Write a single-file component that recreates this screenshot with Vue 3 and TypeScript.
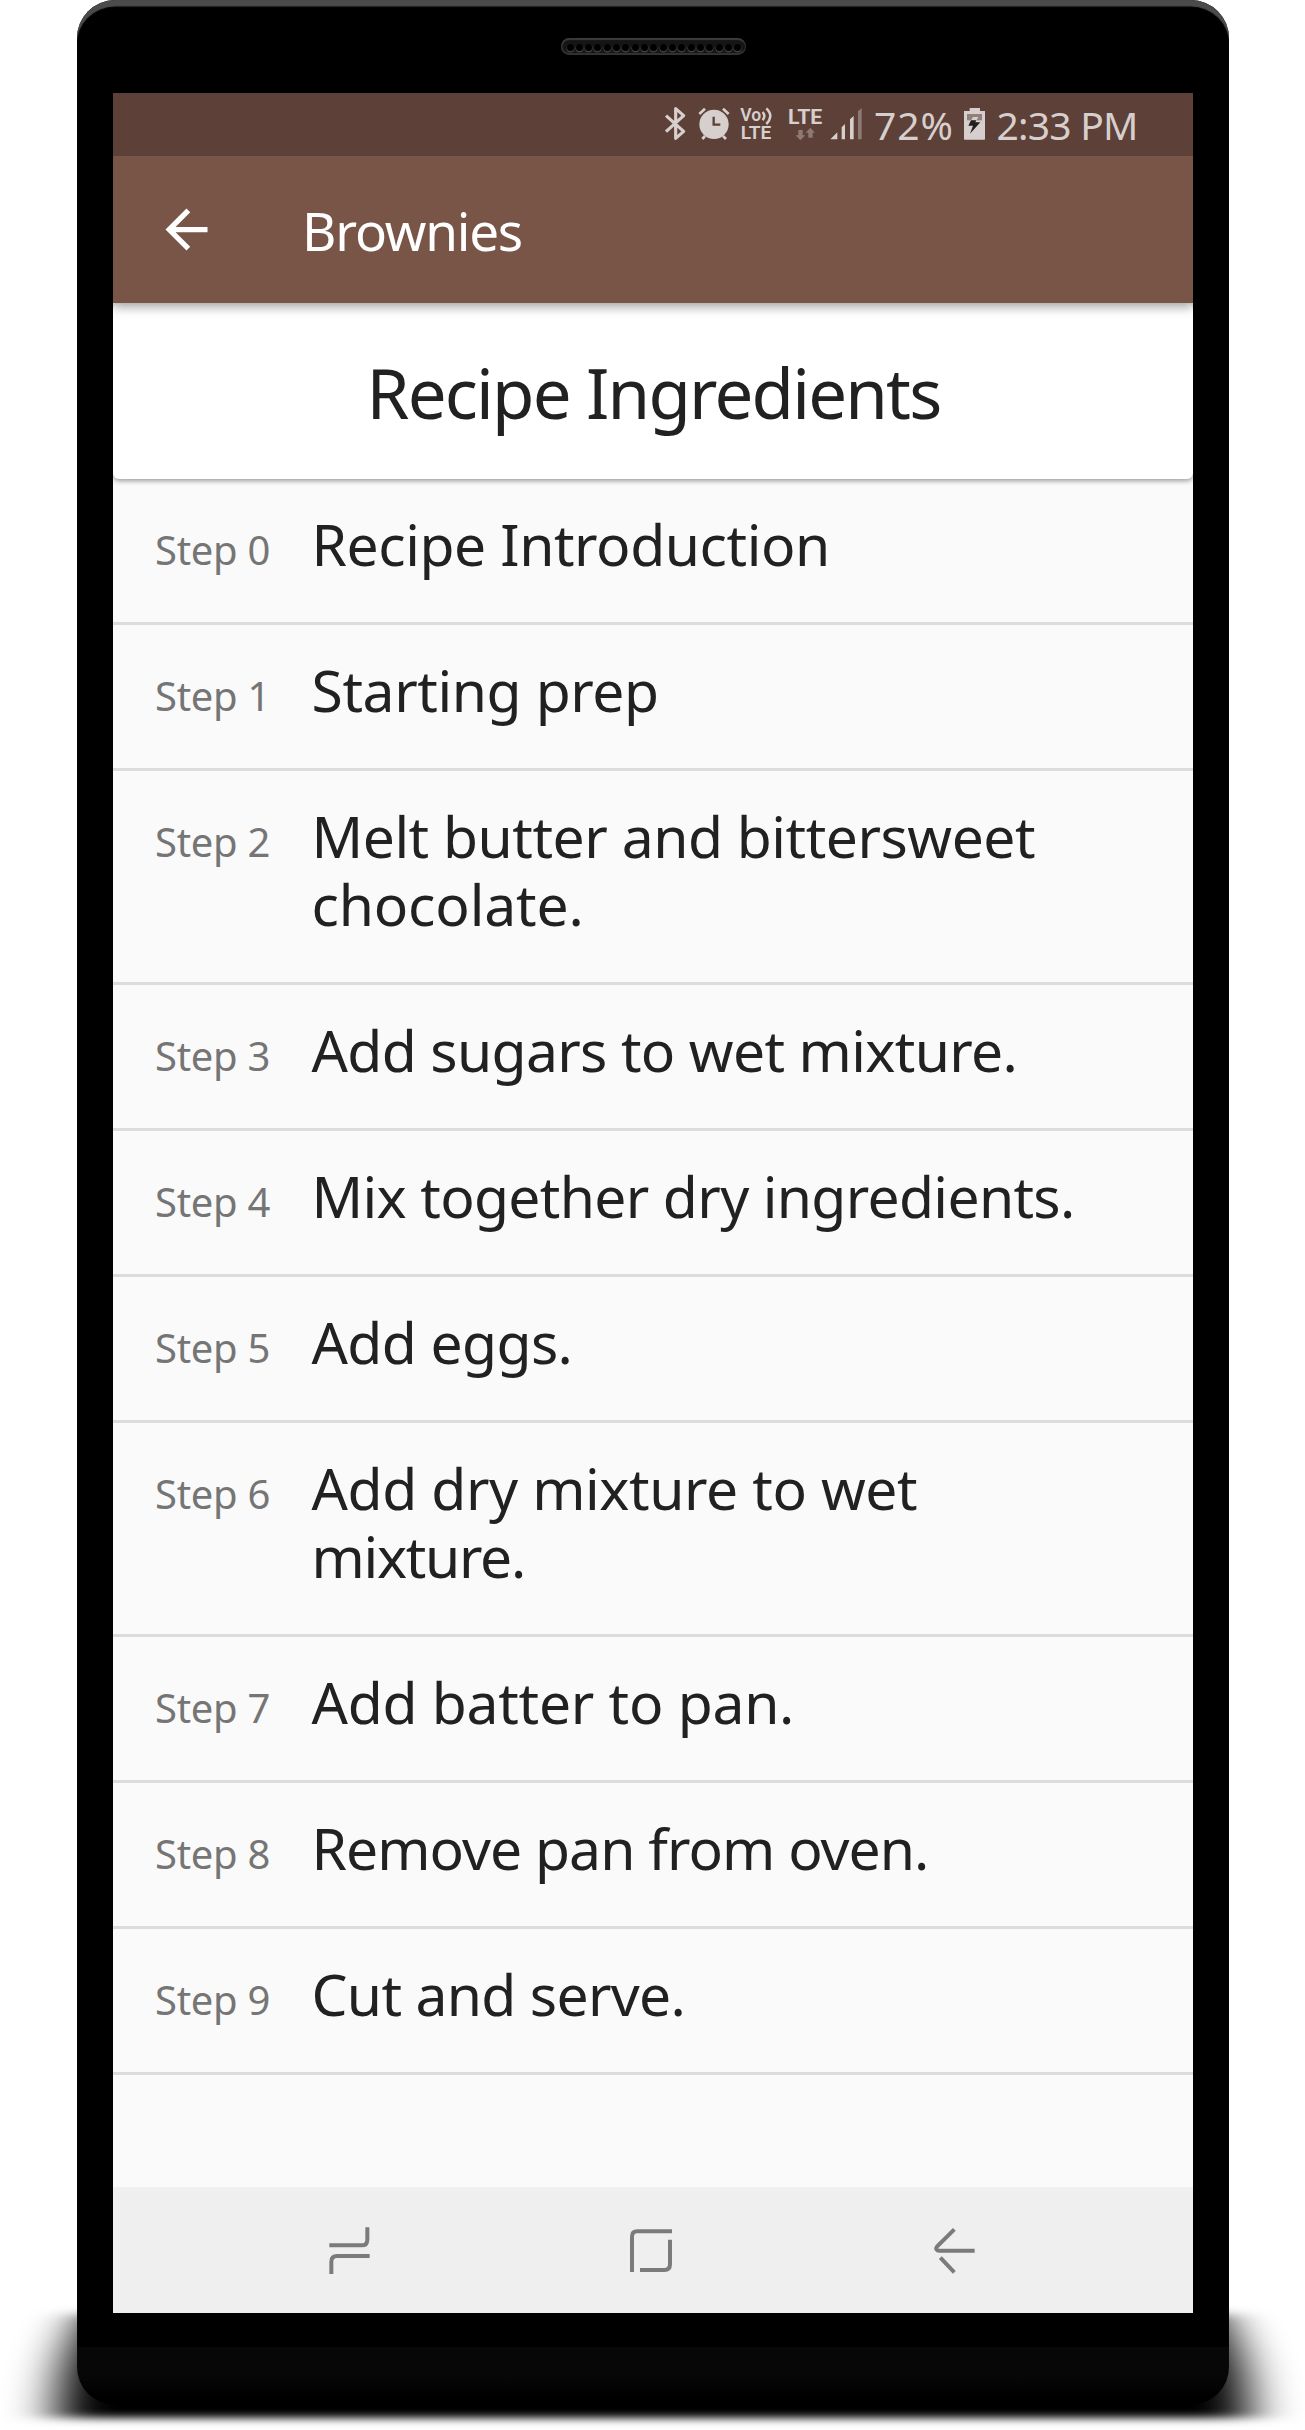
<script setup lang="ts">
interface Line {
  text: string
  tracking: number
}

// Each step title is one or two lines, tracked in px
const steps: Line[][] = [
  [{ text: 'Recipe Introduction', tracking: -0.42 }],
  [{ text: 'Starting prep', tracking: -0.4 }],
  [
    { text: 'Melt butter and bittersweet', tracking: -0.48 },
    { text: 'chocolate.', tracking: -0.15 },
  ],
  [{ text: 'Add sugars to wet mixture.', tracking: -0.65 }],
  [{ text: 'Mix together dry ingredients.', tracking: -0.66 }],
  [{ text: 'Add eggs.', tracking: -0.6 }],
  [
    { text: 'Add dry mixture to wet', tracking: -0.4 },
    { text: 'mixture.', tracking: -1.3 },
  ],
  [{ text: 'Add batter to pan.', tracking: -0.27 }],
  [{ text: 'Remove pan from oven.', tracking: -0.95 }],
  [{ text: 'Cut and serve.', tracking: -0.68 }],
]
</script>

<template>
  <div class="stage">
    <svg class="ground-shadow" viewBox="0 2260 1305 170" width="1305" height="170">
      <defs>
        <filter id="soft" filterUnits="userSpaceOnUse" x="-60" y="2260" width="1425" height="200">
          <feGaussianBlur stdDeviation="25 4.5" />
        </filter>
      </defs>
      <path
        d="M88 2314C68 2345 58 2380 57 2418H1249C1248 2380 1238 2345 1218 2314Z"
        filter="url(#soft)"
      />
    </svg>

    <div class="device">
      <div class="top-bezel">
        <div class="speaker">
          <i v-for="n in 19" :key="n" class="hole"></i>
        </div>
      </div>

      <main class="screen">
        <div class="status">
          <svg class="status-icons" viewBox="0 9 690 189" width="230" height="63">
            <g fill="none" stroke="#d7cfcd">
              <path d="M78 77L131 124L107 145V56L131 77L78 125" stroke-width="9.5" stroke-linejoin="round" />
              <path d="M178 72L195 56M249 56L266 72M187 147L195 138M249 138L258 147" stroke-width="8" />
              <path d="M368 66Q378 78 368 91M379 55Q391 67 391 78Q390 91 379 102" stroke-width="7.5" />
            </g>
            <circle cx="222" cy="103" r="44" fill="#d7cfcd" />
            <path d="M221 80V104H241" fill="none" stroke="#5d4037" stroke-width="7" />
            <text class="glyph" x="301" y="94" font-size="54" textLength="63" lengthAdjust="spacingAndGlyphs">Vo</text>
            <text class="glyph" x="302" y="147" font-size="54" textLength="92" lengthAdjust="spacingAndGlyphs">LTE</text>
            <text class="glyph bold" x="444" y="101" font-size="60" textLength="103" lengthAdjust="spacingAndGlyphs">LTE</text>
            <path d="M475 120H488V136H496L481 151L467 136H475ZM505 143V128H497L511 113L525 128H518V143Z" fill="#8d7a74" />
            <path d="M571 148L592 127V148ZM605 148V112L615 102V148ZM630 148V88L641 78V148Z" fill="#d7cfcd" />
            <path d="M654 148V64L665 54V148Z" fill="#8d7a74" />
          </svg>
          <span class="percent">72%</span>
          <svg class="battery" viewBox="222 9 63 189" width="21" height="63">
            <path d="M222 63H239V54H270V63H285V147Q285 149 283 149H224Q222 149 222 147Z" fill="#d7cfcd" />
            <path d="M231 72H276V91H231Z" fill="#93807b" />
            <path d="M249 81H265L257 96H271L240 131L249 106H235Z" fill="#d7cfcd" />
            <path d="M243 91H259L256 97H271L240 131L249 107H235Z" fill="#211f1f" />
          </svg>
          <span class="time">2:33 PM</span>
        </div>

        <header class="app-bar">
          <svg viewBox="0 0 24 24" width="63" height="63">
            <path d="M20 11H7.83l5.59-5.59L12 4l-8 8 8 8 1.41-1.41L7.83 13H20v-2z" fill="#fff" />
          </svg>
          <span class="title">Brownies</span>
        </header>

        <section class="content">
          <h1 class="card">Recipe Ingredients</h1>
          <ul class="steps">
            <li v-for="(lines, i) in steps" :key="i" class="step">
              <span class="label">Step {{ i }}</span>
              <div class="name">
                <span
                  v-for="line in lines"
                  :key="line.text"
                  class="line"
                  :style="{ letterSpacing: line.tracking + 'px' }"
                >{{ line.text }}</span>
              </div>
            </li>
          </ul>
        </section>

        <nav class="nav">
          <svg class="recents" viewBox="987 142 123 144" width="41" height="48">
            <path d="M988 197H1085Q1102 197 1102 180V143M994 283V246Q994 229 1011 229H1109" />
          </svg>
          <svg class="home" viewBox="990 82 126 144" width="42" height="48">
            <path d="M996 217V111Q996 95 1012 95H1116M1110 120V194Q1110 211 1093 211H1020" />
          </svg>
          <svg class="back" viewBox="102 142 123 144" width="41" height="48">
            <path d="M163 149L111 201Q107 206 110 210Q112 213 117 213H224M121 234L163 278" />
          </svg>
        </nav>
      </main>
    </div>
  </div>
</template>

<style>
body {
  margin: 0;
  background: #fff;
}
</style>

<style scoped>
.stage {
  position: relative;
  width: 1305px;
  height: 2430px;
  overflow: hidden;
  background: #fff;
  font-family: 'Noto Sans', 'Open Sans', sans-serif;
}

.ground-shadow {
  position: absolute;
  left: 0;
  bottom: 0;
}

.device {
  position: relative;
  width: 1152px;
  height: 2405px;
  margin-left: 77px;
  border-radius: 38px;
  background: linear-gradient(#000 0 2347px, #070707 2347px, #070707 2375px, #000 2398px);
  box-shadow: inset 0 7px 1px -0.5px #4b4b4b;
}

.top-bezel {
  display: flex;
  justify-content: center;
  height: 93px;
  padding-top: 38px;
  box-sizing: border-box;
}

.speaker {
  display: flex;
  align-items: center;
  justify-content: space-between;
  width: 185px;
  height: 17px;
  padding: 2px 4px 0 6px;
  box-sizing: border-box;
  border-radius: 9px;
  background: #151515;
  box-shadow: inset 0 2px 1px #3c3c3c, inset 0 -2px 1px #333, inset 2px 0 1px #292929;
}

.hole {
  width: 7px;
  height: 7px;
  border-radius: 50%;
  background: #000;
  box-shadow: 0 1px 0 0.5px #3d3d3d;
}

.screen {
  display: flex;
  flex-direction: column;
  width: 1080px;
  height: 2220px;
  margin-left: 36px;
  background: #fafafa;
}

.status {
  display: flex;
  align-items: center;
  height: 63px;
  padding-left: 527px;
  background: #5d4037;
  color: #d7cfcd;
  font-size: 39px;
  line-height: 63px;
  white-space: nowrap;
}

.glyph {
  font-family: Roboto, sans-serif;
  font-weight: 600;
  fill: #d7cfcd;
}

.bold {
  font-weight: 700;
}

.percent {
  width: 90px;
  margin-left: 4px;
  letter-spacing: 1px;
}

.time {
  margin-left: 11.5px;
  letter-spacing: -0.75px;
}

.app-bar {
  position: relative;
  z-index: 1;
  display: flex;
  align-items: center;
  height: 147px;
  padding-left: 42px;
  background: #795548;
  color: #fff;
  clip-path: inset(0 0 -24px 0);
  box-shadow: 0 4px 10px rgba(0, 0, 0, 0.36);
}

.title {
  margin-left: 84px;
  padding-top: 1px;
  font-size: 53px;
  letter-spacing: -1.2px;
}

.content {
  flex: 1;
  overflow: hidden;
}

.card {
  height: 176px;
  margin: 0;
  padding: 42px 0 0 1px;
  box-sizing: border-box;
  border-radius: 6px;
  background: #fff;
  box-shadow: 0 2px 5px rgba(0, 0, 0, 0.38);
  color: #212121;
  font-size: 69px;
  font-weight: 400;
  letter-spacing: -1.8px;
  line-height: 94px;
  text-align: center;
}

.steps {
  margin: 0;
  padding: 0;
  list-style: none;
}

.step {
  display: flex;
  align-items: flex-start;
  padding: 31px 0 44px 42px;
  border-bottom: 3px solid #dcdcdc;
}

.label {
  width: 156.5px;
  margin-top: 13px;
  color: #757575;
  font-size: 40px;
  letter-spacing: -0.3px;
  line-height: 54px;
}

.name {
  color: #212121;
  font-size: 57px;
  line-height: 68px;
}

.line {
  display: block;
  white-space: nowrap;
}

.nav {
  display: flex;
  align-items: center;
  height: 126px;
  padding: 2px 0 0 216px;
  box-sizing: border-box;
  background: #efefef;
}

.nav path {
  fill: none;
  stroke: #7b7b7b;
  stroke-width: 12;
}

.home {
  margin-left: 260px;
}

.back {
  margin-left: 262px;
}
</style>
